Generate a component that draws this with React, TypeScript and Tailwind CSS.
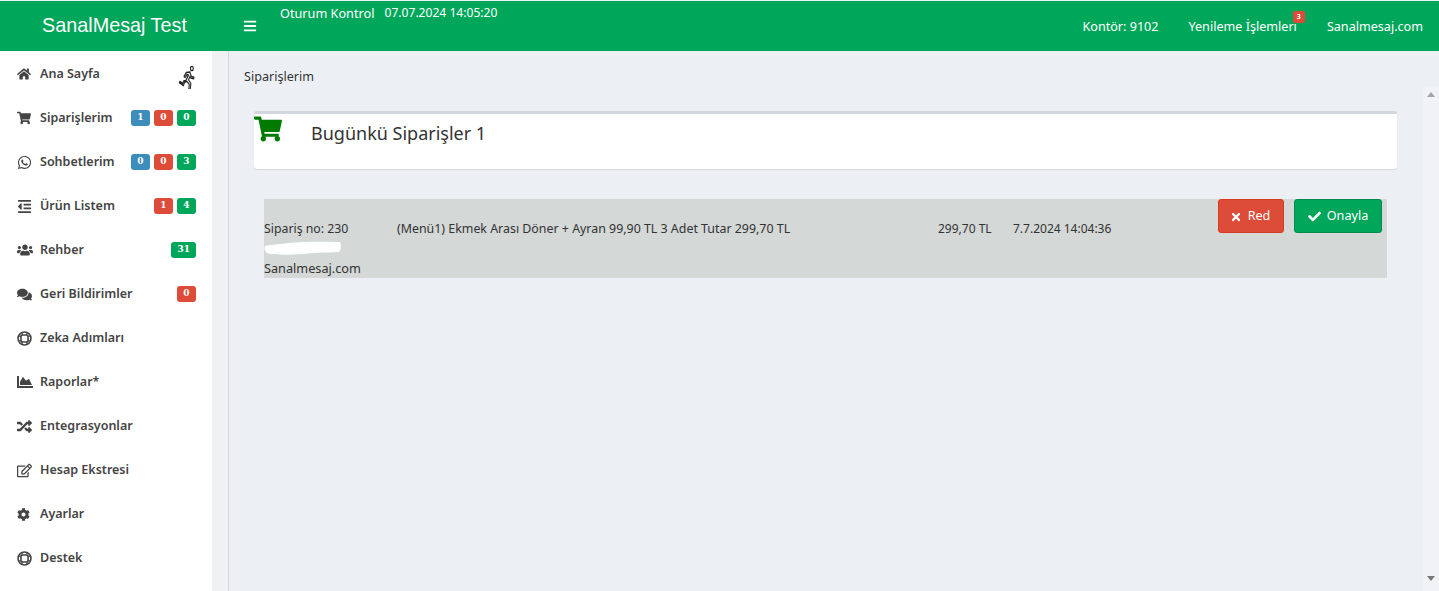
import type { ReactNode } from "react";
import {
  FaBars,
  FaChartArea,
  FaCheck,
  FaCog,
  FaComments,
  FaHome,
  FaOutdent,
  FaRandom,
  FaRegEdit,
  FaShoppingCart,
  FaTimes,
  FaUsers,
  FaWhatsapp
} from "react-icons/fa";

type BadgeColor = "blue" | "red" | "green";

const badgeColors: Record<BadgeColor, string> = {
  blue: "bg-[#3c8dbc]",
  red: "bg-[#dd4b39]",
  green: "bg-[#00a65a]"
};

function RingIcon() {
  return (
    <svg viewBox="0 0 16 16" className="h-[15px] w-[15px]" fill="none" stroke="currentColor" strokeWidth="1.7">
      <circle cx="8" cy="8" r="6.9" />
      <rect x="4.2" y="4.2" width="7.6" height="7.600" rx="2" />
      <path d="M5.500 1.500v3M10.500 1.500v3M5.500 11.500v3M10.500 11.500v3M1.500 5.500h3M1.500 10.500h3M11.500 5.500h3M11.500 10.500h3" strokeWidth="1.1" />
    </svg>
  );
}

const menu: { label: string; icon: ReactNode; badges?: [BadgeColor, string][] }[] = [
  { label: "Siparişlerim", icon: <FaShoppingCart />, badges: [["blue", "1"], ["red", "0"], ["green", "0"]] },
  { label: "Sohbetlerim", icon: <FaWhatsapp className="text-[15px]" />, badges: [["blue", "0"], ["red", "0"], ["green", "3"]] },
  { label: "Ürün Listem", icon: <FaOutdent className="text-[15px]" />, badges: [["red", "1"], ["green", "4"]] },
  { label: "Rehber", icon: <FaUsers className="text-[16px]" />, badges: [["green", "31"]] },
  { label: "Geri Bildirimler", icon: <FaComments className="text-[15px]" />, badges: [["red", "0"]] },
  { label: "Zeka Adımları", icon: <RingIcon /> },
  { label: "Raporlar*", icon: <FaChartArea className="text-[16px]" /> },
  { label: "Entegrasyonlar", icon: <FaRandom className="text-[15px]" /> },
  { label: "Hesap Ekstresi", icon: <FaRegEdit className="text-[15px]" /> },
  { label: "Ayarlar", icon: <FaCog className="text-[13px]" /> },
  { label: "Destek", icon: <RingIcon /> }
];

function Badge({ color, children }: { color: BadgeColor; children: ReactNode }) {
  return (
    <span
      className={`flex h-4 min-w-[19px] items-center justify-center rounded-[3px] px-[6px] font-['DejaVu_Serif',serif] text-[9px] font-bold text-white ${badgeColors[color]}`}
    >
      {children}
    </span>
  );
}

function MenuRow({ label, icon, badges }: { label: string; icon: ReactNode; badges?: [BadgeColor, string][] }) {
  return (
    <div className="flex h-11 items-center pl-[17px] pr-4 text-[#444]">
      <span className="flex w-[23px] shrink-0 items-center text-sm">{icon}</span>
      <span className="text-[12.5px] font-semibold">{label}</span>
      {badges && (
        <span className="ml-auto flex gap-[4px]">
          {badges.map(([color, value], i) => (
            <Badge key={i} color={color}>
              {value}
            </Badge>
          ))}
        </span>
      )}
    </div>
  );
}

function Runner() {
  return (
    <svg
      viewBox="0 0 24 24"
      preserveAspectRatio="none"
      className="h-6 w-[18px]"
      fill="#fff"
      stroke="#222"
      strokeWidth="1.4"
      strokeLinejoin="round"
      strokeLinecap="round"
    >
      <circle cx="18.5" cy="3.5" r="2" />
      <path d="M16 7l-5 .5-3 4 1.5 1 2.5-3 2 .5-3.5 5.5-3 .5-1 2.5-4-2-.8 1.2 5.5 3 1.6-3.5 3.2-.8 3 3-.5 5h1.8l.9-6-3.2-3.5 2-3.5 1 1.6 4 .8.3-1.6-3.4-.8-2-3.8z" />
    </svg>
  );
}

export default function App() {
  return (
    <div className="flex h-[591px] w-[1439px] flex-col overflow-hidden bg-[#ecf0f5] font-['Noto_Sans',sans-serif] text-[#333]">
      <header className="flex h-[51px] shrink-0 border-t border-[#e8f5ee] bg-[#00a65a] text-white">
        <div className="flex w-[229px] shrink-0 items-center justify-center pb-[1px] font-['Liberation_Sans',sans-serif] text-[19.8px]">
          SanalMesaj Test
        </div>
        <div className="flex flex-1 items-start">
          <FaBars className="mt-[18px] ml-[15px] -translate-x-px text-sm" />
          <div className="ml-[22px] flex gap-[10px] pt-[3px] text-[12.7px]">
            <span>Oturum Kontrol</span>
            <span className="text-[12.1px]">07.07.2024 14:05:20</span>
          </div>
          <nav className="ml-auto flex gap-[30px] pt-[17px] pr-4 text-[12.6px]">
            <span>Kontör: 9102</span>
            <span className="relative">
              Yenileme İşlemleri
              <span className="absolute -top-[7px] -right-[8px] flex h-3 w-3 items-center justify-center rounded-[2px] bg-[#dd4b39] text-[7px] font-bold">
                3
              </span>
            </span>
            <span>Sanalmesaj.com</span>
          </nav>
        </div>
      </header>

      <div className="flex min-h-0 flex-1">
        <aside className="w-[212px] shrink-0 bg-white">
          <div className="flex h-[45px] items-start pl-[17px] pr-4 pt-[14px] text-[#444]">
            <span className="flex h-[17px] w-[23px] shrink-0 items-center text-sm">
              <FaHome />
            </span>
            <span className="text-[12.5px] font-semibold leading-[17px]">Ana Sayfa</span>
            <span className="ml-auto">
              <Runner />
            </span>
          </div>
          {menu.map((item) => (
            <MenuRow key={item.label} {...item} />
          ))}
        </aside>
        <div className="w-[17px] shrink-0 border-r border-[#d2d6de] bg-[#f0f1f3]" />

        <main className="flex min-w-0 flex-1">
          <div className="flex min-w-0 flex-1 flex-col pt-[17px]">
            <div className="pl-[15px] text-[12.6px] leading-[18px]">Siparişlerim</div>

            <section className="mt-[25px] ml-[25px] mr-[26px] h-[58px] rounded-[3px] border-t-[3px] border-[#d2d6de] bg-white shadow-[0_1px_1px_rgba(0,0,0,0.1)]">
              <div className="flex items-start">
                <FaShoppingCart className="mt-[1px] text-[28px] text-[#007a00]" />
                <h3 className="ml-[29px] pt-[6px] text-[18px] leading-[26px]">Bugünkü Siparişler 1</h3>
              </div>
            </section>

            <section className="mt-[30px] ml-[35px] mr-[36px] flex h-[79px] bg-[#d4d8d7] text-xs">
              <div className="w-[133px] shrink-0 pt-[20px] leading-[20px]">
                <div className="text-[12.3px]">Sipariş no: 230</div>
                <div className="h-[19px] pt-[2px]">
                  <svg viewBox="0 0 77 14" className="h-[14px] w-[77px]" fill="#fff">
                    <path d="M2 4.500C14 3 28 1.500 40 1C52 .5 66 .5 76 1C77.500 4 77 9 75 11C60 11.500 48 12 38 13C26 14 12 14 4 12.500C0 10.500 -.5 6 2 4.500Z" />
                  </svg>
                </div>
                <div className="text-[12.7px]">Sanalmesaj.com</div>
              </div>
              <div className="w-[541px] shrink-0 pt-[20px] text-[12.4px] leading-[20px]">
                (Menü1) Ekmek Arası Döner + Ayran 99,90 TL 3 Adet Tutar 299,70 TL
              </div>
              <div className="w-[75px] shrink-0 pt-[20px] leading-[20px]">299,70 TL</div>
              <div className="pt-[20px] leading-[20px]">7.7.2024 14:04:36</div>
              <div className="ml-auto flex items-start gap-[10px] pr-[5px] text-[12.6px]">
                <button className="flex h-[34px] w-[66px] items-center justify-center gap-[6px] rounded-[3px] border border-[#d73925] bg-[#dd4b39] pt-[1px] pr-[2px] text-white">
                  <FaTimes className="text-[12px]" /> Red
                </button>
                <button className="flex h-[34px] w-[88px] items-center justify-center gap-[6px] rounded-[3px] border border-[#008d4c] bg-[#00a65a] pt-[1px] text-white">
                  <FaCheck className="text-[13px]" /> Onayla
                </button>
              </div>
            </section>
          </div>

          <div className="relative mt-9 w-4 shrink-0 bg-[#f0f2f5]">
            <span className="absolute top-[5px] left-[4px] border-x-[4px] border-b-[5px] border-x-transparent border-b-[#a3a3a3]" />
            <span className="absolute bottom-[10px] left-[4px] border-x-[4px] border-t-[5px] border-x-transparent border-t-[#777]" />
          </div>
        </main>
      </div>
    </div>
  );
}
